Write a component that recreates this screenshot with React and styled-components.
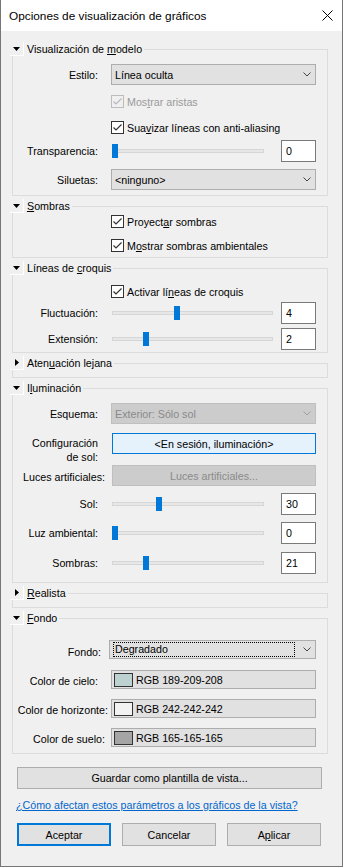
import React from "react";
import styled, { createGlobalStyle, css } from "styled-components";

const GlobalStyle = createGlobalStyle`
  html, body { margin: 0; padding: 0; background: #fff; }
  body {
    font-family: "Liberation Sans", Arial, sans-serif;
    font-size: 10.7px;
    line-height: 14px;
    color: #000;
  }
  * { box-sizing: border-box; }
`;

const Window = styled.div`
  width: 343px;
  height: 867px;
  border: 1px solid #767676;
  border-top: none;
  background: #f0f0f0;
  display: flex;
  flex-direction: column;
`;

const TitleBar = styled.div`
  height: 31px;
  flex-shrink: 0;
  background: #fff;
  display: flex;
  align-items: center;
  justify-content: space-between;
  padding: 0 9px 0 8px;
  font-size: 11.8px;
`;

const Body = styled.div`
  flex: 1;
  padding: 11px 14px 0 9px;
  display: flex;
  flex-direction: column;
`;

const Group = styled.section`
  display: flex;
  flex-direction: column;
  & + & { margin-top: 3px; }
`;

const Header = styled.div`
  display: flex;
  height: 14px;
`;

const Toggle = styled.span`
  width: 14px;
  flex-shrink: 0;
  border-right: 1px solid #fff;
  border-bottom: 1px solid #fff;
  display: flex;
  align-items: center;
  justify-content: center;
`;

const HeaderTitle = styled.span`
  padding: 0 2px 0 3px;
  white-space: nowrap;
`;

const HeaderLine = styled.span`
  flex: 1;
  margin-top: 7px;
  border-top: 1px solid #dcdcdc;
  border-right: 1px solid #dcdcdc;
`;

const Box = styled.div`
  margin-left: 2px;
  border: 1px solid #dcdcdc;
  border-top: none;
  display: flex;
  flex-direction: column;
  padding-bottom: ${p => p.$pb || 0}px;
  min-height: ${p => p.$minH || 0}px;
`;

const Row = styled.div`
  display: flex;
  align-items: ${p => (p.$top ? "flex-start" : "center")};
  height: ${p => p.$h}px;
  margin-top: ${p => p.$mt}px;
  padding-left: ${p => p.$indent || 0}px;
  padding-right: 11px;
`;

const Label = styled.span`
  width: ${p => p.$w || 85}px;
  margin-right: ${p => p.$gap ?? 13}px;
  margin-top: ${p => p.$dy || 0}px;
  flex-shrink: 0;
  text-align: right;
  white-space: nowrap;
`;

const Key = styled.span`
  text-decoration: underline;
  text-underline-offset: 1px;
`;

const Combo = styled.div`
  width: ${p => p.$w || 206}px;
  height: ${p => p.$h || 21}px;
  border: 1px solid ${p => (p.$disabled ? "#bfbfbf" : "#adadad")};
  background: ${p => (p.$disabled ? "#cccccc" : "#e1e1e1")};
  color: ${p => (p.$disabled ? "#8a8a8a" : "#000")};
  display: flex;
  align-items: center;
  justify-content: space-between;
  padding: 0 4px 0 3px;
`;

const FocusText = styled.span`
  flex: 1;
  margin-right: 8px;
  padding-left: 1px;
  height: 15px;
  line-height: 13px;
  border: 1px dotted #000;
`;

const Check = styled.span`
  width: 13px;
  height: 13px;
  flex-shrink: 0;
  margin-right: 3px;
  border: 1px solid ${p => (p.$disabled ? "#bcbcbc" : "#333")};
  background: ${p => (p.$disabled ? "transparent" : "#fff")};
  display: flex;
  align-items: center;
  justify-content: center;
`;

const CheckText = styled.span`
  color: ${p => (p.$disabled ? "#9a9a9a" : "#000")};
  white-space: nowrap;
`;

const Track = styled.div`
  position: relative;
  width: ${p => p.$w}px;
  height: 4px;
  margin-left: 1px;
  background: #e7e7e7;
  border: 1px solid #d6d6d6;
`;

const Thumb = styled.span`
  position: absolute;
  top: -6px;
  width: 6px;
  height: 14px;
  background: #0078d7;
`;

const NumBox = styled.div`
  margin-left: auto;
  width: 35px;
  height: 22px;
  background: #fff;
  border: 1px solid #7a7a7a;
  padding-left: 4px;
  display: flex;
  align-items: center;
`;

const FieldButton = styled.div`
  width: 204px;
  height: 21px;
  margin-left: 1px;
  display: flex;
  align-items: center;
  justify-content: center;
  white-space: nowrap;
  ${p =>
    p.$disabled
      ? css`
          background: #cccccc;
          border: 1px solid #bfbfbf;
          color: #8a8a8a;
        `
      : css`
          background: #e5f1fb;
          border: 1px solid #0078d7;
          color: #000;
        `}
`;

const ColorField = styled.div`
  width: 205px;
  height: 19px;
  background: #e1e1e1;
  border: 1px solid #adadad;
  display: flex;
  align-items: center;
  padding-left: 2px;
`;

const Swatch = styled.span`
  width: 19px;
  height: 14px;
  margin-right: 3px;
  border: 1px solid #333;
  background: ${p => p.$color};
`;

const WideButton = styled.button`
  margin: 13px 0 0 7px;
  width: 305px;
  height: 22px;
  padding: 0;
  font: inherit;
  color: #000;
  background: #e1e1e1;
  border: 1px solid #adadad;
`;

const HelpLink = styled.a`
  margin: 9px 0 0 6px;
  color: #0066cc;
  text-decoration: underline;
  white-space: nowrap;
`;

const Buttons = styled.div`
  display: flex;
  gap: 11px;
  margin: 11px 0 0 7px;
`;

const Button = styled.button`
  width: 94px;
  height: 23px;
  padding: 0;
  font: inherit;
  color: #000;
  background: #e1e1e1;
  border: 1px solid #adadad;
  ${p =>
    p.$primary &&
    css`
      border: 2px solid #0078d7;
    `}
`;

const Chevron = ({ disabled }) => (
  <svg width="8" height="5" viewBox="0 0 8 5">
    <polyline
      points="0.5,0.5 4,4 7.5,0.5"
      fill="none"
      stroke={disabled ? "#a0a0a0" : "#444"}
      strokeWidth="1"
    />
  </svg>
);

const Tick = ({ disabled }) => (
  <svg width="11" height="11" viewBox="0 0 11 11">
    <path
      d="M1.5 5.5 L4 8 L9.5 2.5"
      fill="none"
      stroke={disabled ? "#b8b8b8" : "#333"}
      strokeWidth="1.2"
    />
  </svg>
);

const Arrow = ({ open }) =>
  open ? (
    <svg width="7" height="4" viewBox="0 0 7 4">
      <polygon points="0,0 7,0 3.5,4" fill="#000" />
    </svg>
  ) : (
    <svg width="4" height="7" viewBox="0 0 4 7">
      <polygon points="0,0 4,3.5 0,7" fill="#000" />
    </svg>
  );

const Section = ({ title, open = true, pb, minH, children }) => (
  <Group>
    <Header>
      <Toggle>
        <Arrow open={open} />
      </Toggle>
      <HeaderTitle>{title}</HeaderTitle>
      <HeaderLine />
    </Header>
    <Box $pb={pb} $minH={minH}>
      {children}
    </Box>
  </Group>
);

const CheckRow = ({ mt, disabled, children }) => (
  <Row $mt={mt} $h={13} $indent={98}>
    <Check $disabled={disabled}>
      <Tick disabled={disabled} />
    </Check>
    <CheckText $disabled={disabled}>{children}</CheckText>
  </Row>
);

const SliderRow = ({ mt, label, width = 152, value, max }) => {
  const left = Math.round(((width - 6) * value) / max) - 1;
  return (
    <Row $mt={mt} $h={22}>
      <Label>{label}</Label>
      <Track $w={width}>
        <Thumb style={{ left }} />
      </Track>
      <NumBox>{value}</NumBox>
    </Row>
  );
};

const ComboRow = ({ mt, label, children, disabled }) => (
  <Row $mt={mt} $h={21}>
    <Label>{label}</Label>
    <Combo $disabled={disabled}>
      <span>{children}</span>
      <Chevron disabled={disabled} />
    </Combo>
  </Row>
);

const ColorRow = ({ mt, label, w, gap, color, text }) => (
  <Row $mt={mt} $h={19}>
    <Label $w={w} $gap={gap} $dy={3}>
      {label}
    </Label>
    <ColorField>
      <Swatch $color={color} />
      {text}
    </ColorField>
  </Row>
);

export default function App() {
  return (
    <>
      <GlobalStyle />
      <Window>
        <TitleBar>
          <span>Opciones de visualización de gráficos</span>
          <svg width="11" height="11" viewBox="0 0 11 11">
            <path d="M0.5 0.5 L10.5 10.5 M10.5 0.5 L0.5 10.5" stroke="#000" strokeWidth="1" />
          </svg>
        </TitleBar>
        <Body>
          <Section
            title={
              <>
                Visualización de <Key>m</Key>odelo
              </>
            }
            pb={5}
          >
            <ComboRow mt={8} label="Estilo:">
              Línea oculta
            </ComboRow>
            <CheckRow mt={10} disabled>
              Mos<Key>t</Key>rar aristas
            </CheckRow>
            <CheckRow mt={13}>
              Sua<Key>v</Key>izar líneas con anti-aliasing
            </CheckRow>
            <SliderRow mt={6} label="Transparencia:" value={0} max={100} />
            <ComboRow mt={7} label="Siluetas:">
              &lt;ninguno&gt;
            </ComboRow>
          </Section>

          <Section
            title={
              <>
                <Key>S</Key>ombras
              </>
            }
            pb={5}
          >
            <CheckRow mt={2}>
              Proyect<Key>a</Key>r sombras
            </CheckRow>
            <CheckRow mt={11}>
              M<Key>o</Key>strar sombras ambientales
            </CheckRow>
          </Section>

          <Section
            title={
              <>
                Líneas de <Key>c</Key>roquis
              </>
            }
            pb={2}
          >
            <CheckRow mt={10}>
              Activar lí<Key>n</Key>eas de croquis
            </CheckRow>
            <SliderRow mt={4} label="Fluctuación:" width={161} value={4} max={10} />
            <SliderRow mt={4} label="Extensión:" width={161} value={2} max={10} />
          </Section>

          <Section
            open={false}
            minH={8}
            title={
              <>
                Aten<Key>u</Key>ación lejana
              </>
            }
          />

          <Section
            title={
              <>
                I<Key>l</Key>uminación
              </>
            }
            pb={8}
          >
            <ComboRow mt={8} label="Esquema:" disabled>
              Exterior: Sólo sol
            </ComboRow>
            <Row $mt={9} $h={31} $top>
              <Label $dy={3}>
                Configuración
                <br />
                de sol:
              </Label>
              <FieldButton>&lt;En sesión, iluminación&gt;</FieldButton>
            </Row>
            <Row $mt={1} $h={21}>
              <Label $w={92} $gap={6} $dy={2}>
                Luces artificiales:
              </Label>
              <FieldButton $disabled>Luces artificiales...</FieldButton>
            </Row>
            <SliderRow mt={7} label="Sol:" value={30} max={100} />
            <SliderRow mt={7} label="Luz ambiental:" value={0} max={100} />
            <SliderRow mt={8} label="Sombras:" value={21} max={100} />
          </Section>

          <Section
            open={false}
            minH={8}
            title={
              <>
                <Key>R</Key>ealista
              </>
            }
          />

          <Section
            title={
              <>
                <Key>F</Key>ondo
              </>
            }
            pb={6}
          >
            <Row $mt={15} $h={19}>
              <Label $w={88} $gap={8} $dy={4}>
                Fondo:
              </Label>
              <Combo $w={208} $h={19}>
                <FocusText>Degradado</FocusText>
                <Chevron />
              </Combo>
            </Row>
            <ColorRow
              mt={11}
              label="Color de cielo:"
              color="rgb(189,209,208)"
              text="RGB 189-209-208"
            />
            <ColorRow
              mt={10}
              label="Color de horizonte:"
              w={95}
              gap={3}
              color="rgb(242,242,242)"
              text="RGB 242-242-242"
            />
            <ColorRow
              mt={10}
              label="Color de suelo:"
              w={92}
              gap={6}
              color="rgb(165,165,165)"
              text="RGB 165-165-165"
            />
          </Section>

          <WideButton>Guardar como plantilla de vista...</WideButton>
          <HelpLink href="#">
            ¿Cómo afectan estos parámetros a los gráficos de la vista?
          </HelpLink>
          <Buttons>
            <Button $primary>Aceptar</Button>
            <Button>Cancelar</Button>
            <Button>
              A<Key>p</Key>licar
            </Button>
          </Buttons>
        </Body>
      </Window>
    </>
  );
}
